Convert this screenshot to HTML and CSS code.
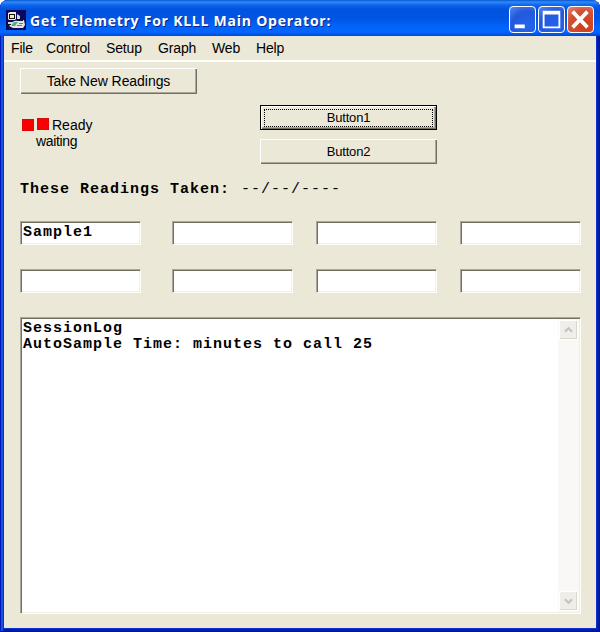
FILE: index.html
```html
<!DOCTYPE html>
<html lang="en">
<head>
<meta charset="utf-8">
<title>Get Telemetry</title>
<link rel="stylesheet" href="styles.css">
</head>
<body>
<div class="window">
  <header class="titlebar">
    <svg class="app-icon" width="20" height="20" viewBox="0 0 20 20">
      <path fill="#0b0860" d="M0 0h20v20H0z"/>
      <path fill="#eceadb" d="M2 3l2-1h6v7l-1 1H3l-1-1z"/>
      <path fill="#111" d="M3 4h6v5H3z"/><path fill="#f3efa0" d="M4 5h4v3H4z"/>
      <path fill="#d8d8d2" d="M2 12h7v2H2zM11 4l3 2v3h-3z"/>
      <path fill="#e4e4de" d="M8 11l10-1 1 5-2 3H7l-4-2z"/>
      <path fill="#111" d="M2 14h3v1H2zM11 10h6v1h-6z"/>
      <path fill="#4eb183" d="M8 12h4l-3 4H5z"/>
      <path stroke="#777" d="M13 13.500h4M11 15.500h5"/>
    </svg>
    <h1 class="title">Get Telemetry For KLLL Main Operator:</h1>
    <div class="controls">
      <svg class="control" viewBox="0 0 27 27"><path fill="#fff" d="M5 19h11v4H5z"/></svg>
      <svg class="control" viewBox="0 0 27 27"><path fill="#fff" fill-rule="evenodd" d="M4 4h19v19H4zM6 8v13h15V8z"/></svg>
      <svg class="control close" viewBox="0 0 27 27"><path stroke="#fff" stroke-width="4" d="M5 5l16 17M21 5L5 22"/></svg>
    </div>
  </header>
  <div class="client">
    <nav class="menu"><span class="m-file">File</span><span class="m-control">Control</span><span class="m-setup">Setup</span><span class="m-graph">Graph</span><span class="m-web">Web</span><span>Help</span></nav>
    <main class="form">
      <button class="button take">Take New Readings</button>
      <section class="actions">
        <div class="status">
          <div class="ready"><i class="lamp"></i><i class="lamp raised"></i><span>Ready</span></div>
          <div class="waiting">waiting</div>
        </div>
        <div class="buttons">
          <button class="button default"><span class="focus">Button1</span></button>
          <button class="button">Button2</button>
        </div>
      </section>
      <div class="taken">These Readings Taken: <span class="date">--/--/----</span></div>
      <div class="fields">
        <div class="field">Sample1</div><div class="field"></div><div class="field"></div><div class="field"></div>
        <div class="field"></div><div class="field"></div><div class="field"></div><div class="field"></div>
      </div>
      <div class="log">
        <div class="log-text">SessionLog<br>AutoSample Time: minutes to call 25</div>
        <div class="scrollbar">
          <svg class="arrow" viewBox="0 0 19 19"><path d="M5.500 11.500l4-4 4 4"/></svg>
          <svg class="arrow" viewBox="0 0 19 19"><path d="M5.500 7.500l4 4 4-4"/></svg>
        </div>
      </div>
    </main>
  </div>
</div>
</body>
</html>
```
FILE: styles.css
```css
* { box-sizing: border-box; }
body { margin: 0; background: #fff; font: 14px/16px "Liberation Sans", Arial, sans-serif; color: #000; }
.window {
  width: 600px; height: 632px; padding: 0 4px 4px; overflow: hidden;
  border-radius: 8px 8px 0 0; background: #0831d9;
  box-shadow: inset 1px 0 #0019b8, inset -1px -1px #00138c, inset 3px 0 #1650e0, inset -3px -3px #001ea0;
}
.titlebar {
  display: flex; align-items: center; height: 36px; margin: 0 -4px; padding: 3px 6px 0;
  background: linear-gradient(#0757d2 0, #3289f5 2px, #0d66ee 5px, #0053df 9px, #0054e3 18px, #0264fb 27px, #0366ff 32px, #0049d2 36px);
}
.app-icon { flex: none; margin-right: 4px; }
.title { flex: 1; margin: 0; padding-top: 2px; font: 700 14px/20px "Open Sans", sans-serif; letter-spacing: .76px; white-space: nowrap; color: #fff; text-shadow: 1px 1px #0a2590; }
.controls { display: flex; gap: 2px; }
.control { width: 27px; height: 27px; border: 1px solid #fff; border-radius: 4px; background: radial-gradient(circle at 70% 80%, #2464ee, #2458dc 60%, #5b89ed); }
.close { background: radial-gradient(circle at 65% 75%, #cf3c15, #d35035 60%, #e38c78); }
.client { height: 592px; background: #ebe8d7; }
.menu { display: flex; height: 26px; padding: 4px 7px 0; border-bottom: 2px solid #fffffa; letter-spacing: -.15px; }
.m-file { width: 35px; }
.m-control { width: 60px; }
.m-setup { width: 52px; }
.m-graph { width: 54px; }
.m-web { width: 44px; }
.form { padding: 6px 15px 0 16px; }
.button {
  display: block; width: 177px; height: 25px; padding: 0; border: 0; background: #ebe8d7;
  font: 13px/25px "Liberation Sans", Arial, sans-serif; letter-spacing: -.2px; color: #000; text-align: center;
  box-shadow: inset 1px 1px #fff, inset -1px -1px #716f64, inset -2px -2px #aca899;
}
.take { height: 26px; font-size: 14px; line-height: 26px; letter-spacing: -.05px; }
.actions { display: flex; margin-top: 11px; }
.status { width: 240px; padding: 12px 0 0 2px; }
.ready { display: flex; height: 16px; }
.lamp { width: 12px; height: 12px; margin: 2px 3px 0 0; background: #fa0000; border: 1px solid #d90909; }
.raised { margin-top: 1px; }
.waiting { margin-left: 14px; letter-spacing: -.35px; }
.buttons { display: grid; gap: 9px; }
.default { padding: 3px; border: 1px solid #000; }
.focus { display: block; height: 18px; line-height: 16px; border: 1px dotted #000; }
.taken, .field, .log-text { font: 700 15px/16px "Liberation Mono", "Courier New", monospace; letter-spacing: 1px; }
.taken { margin-top: 18px; white-space: pre; }
.date { padding-left: 1px; font-weight: 400; }
.fields { display: grid; grid-template-columns: 129px 121px 121px 121px; column-gap: 23px; row-gap: 24px; margin-top: 23px; }
.field { width: 121px; height: 24px; padding: 2px 2px 0; line-height: 18px; }
.field, .log {
  background: #fff; border: 1px solid; border-color: #aca899 #fffff8 #fffff8 #aca899;
  box-shadow: inset 1px 1px #716f64, inset -1px -1px #f1efe2;
}
.log { display: flex; width: 561px; height: 297px; margin-top: 24px; padding: 1px; }
.log-text { flex: 1; padding: 2px 1px; }
.scrollbar { display: flex; flex-direction: column; justify-content: space-between; width: 21px; padding: 1px; background: #f9f8f6; }
.arrow { width: 19px; height: 20px; border: 1px solid #fff; background: #efeee9; box-shadow: inset -1px -1px #d9d7ca; }
.arrow path { fill: none; stroke: #c5c5c0; stroke-width: 2.500; }
```
